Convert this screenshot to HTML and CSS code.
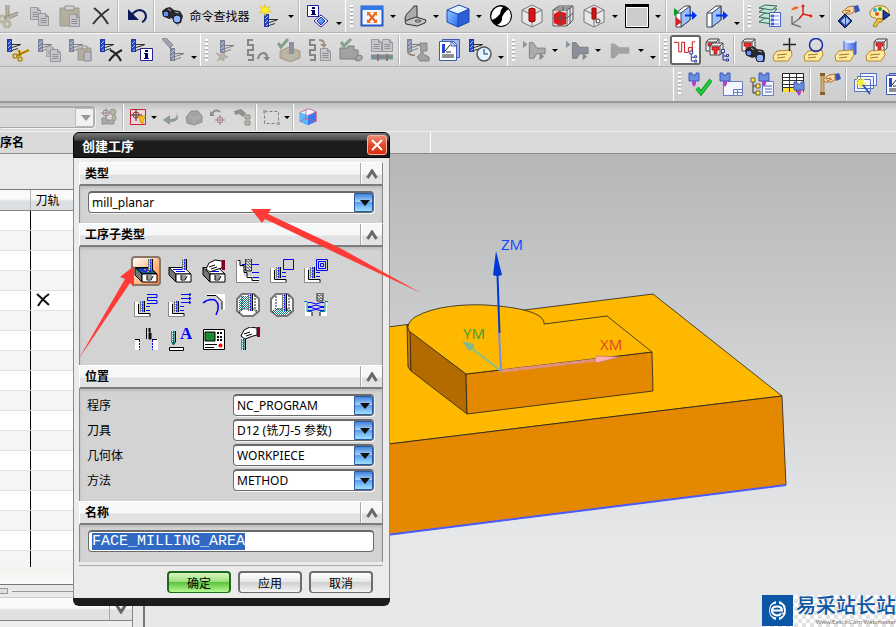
FILE: index.html
```html
<!DOCTYPE html>
<html lang="zh-CN">
<head>
    <meta charset="utf-8">
    <title>创建工序</title>
    <link rel="stylesheet" href="styles.css">
</head>
<body>
    <!-- Icon sprite -->
    <svg class="sprite" aria-hidden="true">
        <defs>
            <linearGradient id="g-blue" x1="0" y1="0" x2="1" y2="1"><stop offset="0" stop-color="#8ec8ff"/><stop offset="1" stop-color="#2a6cf0"/></linearGradient>
            <linearGradient id="g-cyl" x1="0" x2="1"><stop offset="0" stop-color="#b9d0ff"/><stop offset="1" stop-color="#3a63dd"/></linearGradient>
            <pattern id="p-check" width="2" height="2" patternUnits="userSpaceOnUse"><rect width="2" height="2" fill="#fff"/><rect width="1" height="1" fill="#088"/><rect x="1" y="1" width="1" height="1" fill="#088"/></pattern>
            <pattern id="p-mill" width="4" height="4" patternUnits="userSpaceOnUse"><rect width="4" height="4" fill="#2448c8"/><path d="M0 4 4 0" stroke="#9fc0ff"/></pattern>
            <pattern id="p-gray" width="3" height="3" patternUnits="userSpaceOnUse"><rect width="3" height="3" fill="#ddd"/><path d="M0 3 3 3M0 0 3 3" stroke="#333" stroke-width=".7"/></pattern>
            <g id="op">
                <rect x="1.500" y="1.500" width="4" height="12" fill="url(#p-mill)" stroke="#2238a0"/>
                <path d="M6 6.500h9M6 9.500 14 7M6 12.500l6-2" stroke="#333" fill="none"/>
            </g>
            <g id="mill"><rect width="5" height="11" fill="#5aa8a8"/><path d="M.5 0v11" stroke="#777"/><path d="M1.500 0v11" stroke="#fff" stroke-dasharray="1 1"/><path d="M2.500 0v11" stroke="#22f" stroke-dasharray="2 1"/><path d="M4.500 0v11" stroke="#000"/></g>
            <g id="tree"><path d="M2 2v9h4M2 7h4" fill="none" stroke="#239"/><path d="M.5.5h3v3h-3zM5.500 5.500h2v2h-2zM5.500 10h2v2h-2z" fill="#fff" stroke="#239"/></g>
            <g id="tag"><path d="M1 18 5 13l14-1 1 5-4 6-14 0z" fill="#ffe9a0" stroke="#b8862a"/><path d="M5 17l10-1M5 20l8-1" stroke="#a07820"/></g>
            <g id="binoc"><path d="M1 5 5 2 9 1 13 4 19 5 22 10 20 17 15 18 11 12 8 13 2 10z" fill="#2a2a2e"/><path d="M7 3l3 2M14 6l4 1" stroke="#aaa"/><ellipse cx="5" cy="8" rx="3" ry="3" fill="#678fe8" stroke="#112"/><ellipse cx="16" cy="13" rx="4" ry="4" fill="#8fb4ff" stroke="#112"/></g>
            <g id="redcube"><path d="M1 4 4 1h10v9l-3 3H1z" fill="#eee" stroke="#444"/><path d="M1 4h10v9M11 4l3-3" fill="none" stroke="#444"/><path d="M3 5h7v3H8v4H5V8H3z" fill="#e33" stroke="#800" stroke-width=".6"/></g>
            <g id="spindle"><path d="M1 1h3v2h4V1h3v8H1z" fill="#6c8ee0" stroke="#3a5ab8"/><path d="M4 9h4v3l-2 3-2-3z" fill="#b040d0"/></g>
            <g id="doc"><path d="M.5.5h7l3 3v9h-10z" fill="#b4b8cc" stroke="#667"/><path d="M7.500.5v3h3M2.500 5.500h6M2.500 7.500h6M2.500 9.500h6" fill="none" stroke="#556"/></g>
            <g id="hand"><path d="M0 7 6 2 12 1v6L8 9 3 9z" fill="#ffd9a0" stroke="#a87030"/><path d="M3 6 8 5M4 8 9 6" stroke="#a87030" fill="none"/><path d="M12 1l4-1 2 6-5 2z" fill="#3454b8"/></g>
            <g id="wirecube"><path d="M12 1 22 6v12l-10 5L2 18V6zM2 6l10 5 10-5M12 11v12" fill="#fff" fill-opacity=".4" stroke="#777"/></g>
            <g id="pocket"><path d="M.5 9v14.500h15" stroke="#888" fill="none"/><path d="M1 9h3v11h12v3H1z" fill="#fff"/><path d="M4.500 11v9.500H16v3" stroke="#000" fill="none"/><use href="#mill" x="6" y="8"/><path d="M12 13.500h4M12 17.500h4" stroke="#00f"/></g>
            <g id="glove"><path d="M4 10 7 4 13 1 20 2v7L16 10 8 13z" fill="#fff" stroke="#000"/><path d="M7 8 13 6M9 10l6-2" stroke="#000" fill="none"/><path d="M20 1h3v10h-3z" fill="#800020"/></g>
        </defs>

        <symbol id="i-cut" viewBox="0 0 24 24"><g fill="none" stroke="#b09a50" stroke-width="3"><path d="M11 1 12 14M22 9 8 15"/><circle cx="6" cy="15" r="3"/><circle cx="11" cy="20" r="3"/></g><g fill="none" stroke="#665820"><path d="M10 1v15M22 8 8 13M13 1v12M22 11l-9 4"/></g></symbol>
        <symbol id="i-copy" viewBox="0 0 24 24"><use href="#doc" x="3" y="3"/><use href="#doc" x="11" y="9"/></symbol>
        <symbol id="i-paste" viewBox="0 0 24 24"><path d="M2 4h19v18H2z" fill="#a98c3c" stroke="#665"/><path d="M7 2h9v4H7z" fill="#ccc" stroke="#555"/><use href="#doc" x="11" y="10"/></symbol>
        <symbol id="i-del" viewBox="0 0 24 24"><path d="M5 4Q13 10 19 20M20 5Q11 11 4 20" fill="none" stroke="#333" stroke-width="2"/></symbol>
        <symbol id="i-undo" viewBox="0 0 24 24"><path d="M6 12Q10 6 15 6q6 1 6 7-1 4-4 5" fill="none" stroke="#0c1a5c" stroke-width="2"/><path d="M3 5v11h11z" fill="#0c1a5c"/></symbol>
        <symbol id="i-find" viewBox="0 0 24 24"><path d="M13 17 20 15l-3 8z" fill="#aaa"/><use href="#binoc" x="0" y="2"/></symbol>
        <symbol id="i-newop" viewBox="0 0 24 24"><use href="#op" x="5" y="9"/><path d="M7 0 8 4 12 2 10 6 14 8 9 8 7 12 6 8 1 9 4 6 2 2 6 4z" fill="#ffee20" stroke="#e0b800" stroke-width=".5"/></symbol>
        <symbol id="i-info" viewBox="0 0 24 24"><path d="M1.500 1.500h11v11h-11z" fill="#fff" stroke="#229"/><path d="M6 3h3v2H6zM5 6h4v4h1v1H5v-1h1V7H5z" fill="#006"/><path d="M15 11 22 17 15 23 8 17z" fill="#fff" stroke="#229"/><path d="M15 13 19 17 15 21 11 17z" fill="url(#g-blue)" stroke="#229"/></symbol>
        <symbol id="i-win" viewBox="0 0 24 24"><path d="M1.500 2.500h21v19h-21z" fill="#f2f7ff" stroke="#2456c8" stroke-width="2"/><path d="M1 2h22v4H1z" fill="#3477e8"/><path d="M8 9 16 18M16 9 8 18" stroke="#e86010" stroke-width="2"/><path d="M7 8h4L7 12zM17 8v4l-4-4zM7 19v-4l4 4zM17 19h-4l4-4z" fill="#f07010"/></symbol>
        <symbol id="i-clip" viewBox="0 0 24 24"><path d="M2 16Q2 10 7 7L11 2 14 2v12l-9 3z" fill="#aaa" stroke="#333"/><path d="M2 17 13 13l10 3-1 3-8 3-11-2z" fill="#c4c4c4" stroke="#333"/><ellipse cx="15" cy="17" rx="3" ry="1" fill="#eee" stroke="#444"/></symbol>
        <symbol id="i-cube" viewBox="0 0 24 24"><path d="M1 6 13 1 23 5v13l-11 5L1 18z" fill="#4b90f8"/><path d="M1 6 13 1 23 5 12 10z" fill="#e4f5ff"/><path d="M1 6 12 10v13L1 18z" fill="url(#g-blue)"/><path d="M12 10 23 5v13l-11 5z" fill="#2c5fd8"/><path d="M1 6 13 1 23 5v13l-11 5L1 18zM1 6 12 10 23 5M12 10v13" fill="none" stroke="#1d48b8"/></symbol>
        <symbol id="i-bw" viewBox="0 0 24 24"><circle cx="12" cy="12" r="10.500" fill="#000"/><path d="M20 5Q24 12 20 19 14 24 8 21 14 18 13 13 16 7 20 5z" fill="#fff"/><path d="M4 7Q8 1 14 3 11 6 11 10 8 14 3 16 1 12 4 7z" fill="#fff"/><circle cx="12" cy="12" r="10.500" fill="none" stroke="#000"/></symbol>
        <symbol id="i-cyl" viewBox="0 0 24 24"><use href="#wirecube"/><path d="M9 5q3-2 6 0v12q-3 2-6 0z" fill="#d01818" stroke="#900"/></symbol>
        <symbol id="i-redgrid" viewBox="0 0 24 24"><path d="M2 6 8 2h14v14l-6 7H2z" fill="#e4e4e4"/><path d="M3 10 8 7l7 2v11l-6 2-6-3z" fill="#e01818"/><path d="M2 6 8 2h14v14l-6 6H2zM2 6h14v16M16 6l6-4M9 6v16M2 14h14l6-5M12 3v4M5 4h14v16" fill="none" stroke="#555"/></symbol>
        <symbol id="i-cyl2" viewBox="0 0 24 24"><use href="#wirecube"/><path d="M10 4h4v11h-4z" fill="#d01818" stroke="#900"/><circle cx="16" cy="17" r="2" fill="#fff" stroke="#333"/></symbol>
        <symbol id="i-rect" viewBox="0 0 24 24"><path d="M.5.5h23v23H.5z" fill="#ccc" stroke="#000"/><path d="M0 0h24v3H0z" fill="#000"/><path d="M1.500 3.500h21v19h-21z" fill="none" stroke="#fff"/></symbol>
        <symbol id="i-door" viewBox="0 0 24 24"><path d="M3 9 12 2h5v14l-9 7H3z" fill="#fff" stroke="#345"/><path d="M8 9 17 2v14l-9 7z" fill="#9cc0ff" stroke="#345"/><path d="M3 9h5" stroke="#345"/><path d="M12 10.500h7V7l5 4.500-5 4.500v-3.500h-7z" fill="#0030f0"/></symbol>
        <symbol id="i-doorin" viewBox="0 0 24 24"><use href="#i-door" width="24" height="24"/><path d="M1 4 6 8 1 12z" fill="#0a9a20"/><path d="M3 13v9l6-4z" fill="#d82020"/></symbol>
        <symbol id="i-layers" viewBox="0 0 24 24"><g fill="#c0e8d4" stroke="#356a5a"><path d="M1 18 7 14l12 1-5 5z"/><path d="M1 13 7 9l12 1-5 5z"/><path d="M1 8 7 4l12 1-5 5z"/><path d="M1 4 7 1l12 1-5 4z"/></g><path d="M11.500 8.500h11v14h-11z" fill="#f4f7ff" stroke="#4462c8"/><path d="M13 11h3v2h-3zM13 15h3v2h-3zM13 19h3v2h-3zM17 12h4M17 16h4M17 20h4" fill="#4462c8" stroke="#4462c8" stroke-width=".7"/></symbol>
        <symbol id="i-axes" viewBox="0 0 24 24"><path d="M14 1v9l8 2M14 10l-4 5" fill="none" stroke="#e02010" stroke-width="1.500"/><path d="M12 3 14 0l2 3zM21 10l3 2-3 2z" fill="#e02010"/><path d="M3 12v8l9 3M3 20l7-5" fill="none" stroke="#777" stroke-width="1.500"/><path d="M2 6Q5 1 10 3L8 5 4 6z" fill="#e86820"/></symbol>
        <symbol id="i-handop" viewBox="0 0 24 24"><use href="#hand" x="5" y="1"/><path d="M8 10 15 17 8 24 1 17z" fill="#1e3c98" stroke="#001850"/><path d="M8 13v8l-4-4zM9 13l4 4-4 4z" fill="#a9c8ff"/></symbol>
        <symbol id="i-palette" viewBox="0 0 24 24"><path d="M2 8Q6 0 15 2q7 2 6 9-3 5-9 4-4 1-5-1-6-1-5-6z" fill="#ffe7a8" stroke="#a87c20"/><circle cx="7" cy="6" r="2" fill="#20b0e0"/><circle cx="12" cy="5" r="2" fill="#30a030"/><circle cx="9" cy="10" r="2" fill="#e05020"/><path d="M15 6 22 11 15 16z" fill="#1e3c98" stroke="#001850"/><path d="M5 22l5-8 4 1v3h-3l-3 5z" fill="#f2c53c" stroke="#a87c20"/></symbol>

        <symbol id="i-opcut" viewBox="0 0 24 24"><use href="#op"/><path d="M13 12l1 6M23 12l-13 6" stroke="#dcb020" stroke-width="3"/><path d="M13 12l1 6M23 12l-13 6" stroke="#7a6010"/><g fill="none" stroke="#b08810" stroke-width="1.500"><circle cx="9" cy="18" r="2"/><circle cx="14" cy="21" r="2"/></g></symbol>
        <symbol id="i-opcopy" viewBox="0 0 24 24"><use href="#op"/><use href="#doc" x="9" y="8" transform="translate(2 2) scale(.8)"/><use href="#doc" x="13" y="11"/></symbol>
        <symbol id="i-oppaste" viewBox="0 0 24 24"><use href="#op"/><path d="M10 10h13v12H10z" fill="#a98c3c" stroke="#665"/><path d="M14 8h5v3h-5z" fill="#ccc" stroke="#555"/><path d="M16 14h7v9h-7z" fill="#aab" stroke="#556"/></symbol>
        <symbol id="i-opdel" viewBox="0 0 24 24"><use href="#op"/><path d="M11 12Q18 15 22 23M23 12Q15 16 10 23" fill="none" stroke="#222" stroke-width="2"/></symbol>
        <symbol id="i-opinfo" viewBox="0 0 24 24"><use href="#op"/><path d="M10.500 10.500h12v12h-12z" fill="#fff" stroke="#229"/><path d="M15 12h3v2h-3zM14 15h4v5h1v1h-5v-1h1v-4h-1z" fill="#006"/></symbol>
        <symbol id="i-optool" viewBox="0 0 24 24"><path d="M1 1 5 0l7 7-3 3z" fill="#5a7ab8" stroke="#445"/><use href="#op" x="8" y="9"/></symbol>
        <symbol id="i-gen" viewBox="0 0 24 24"><use href="#op" x="4" y="1"/><path d="M5 17 1 15l4 4-3 4 4-2 3 2v-3l4-1-4-2 1-3z" fill="#b89858" stroke="#806030" stroke-width=".6"/></symbol>
        <symbol id="i-path" viewBox="0 0 24 24"><path d="M7 2H2v5h5v5H2v5h5v5H2" fill="none" stroke="#444" stroke-width="2"/><path d="M12 21q1-6 6-6 3 1 3 4" fill="none" stroke="#345" stroke-width="2"/><path d="M17 19h7l-3 4z" fill="#345"/></symbol>
        <symbol id="i-verify" viewBox="0 0 24 24"><path d="M3 13 12 9l11 4v7l-10 4L3 20z" fill="#d88838" stroke="#864"/><path d="M6 15l7 2 7-2v4l-7 3-7-3z" fill="#9a4"/><rect x="12" y="4" width="5" height="12" fill="#3b56a8"/><path d="M1 5 4 9 11 1" fill="none" stroke="#0a8a28" stroke-width="3"/></symbol>
        <symbol id="i-list" viewBox="0 0 24 24"><path d="M7 2H2v5h5v5H2v5h5v5H2" fill="none" stroke="#444" stroke-width="2"/><path d="M11 2q5 0 5 4" fill="none" stroke="#c04010" stroke-width="2"/><path d="M12 6h7l-3 4z" fill="#c04010"/><use href="#doc" x="12" y="10"/></symbol>
        <symbol id="i-machine" viewBox="0 0 24 24"><path d="M1 10h8V8h6v4h4v9H1z" fill="#777" stroke="#333"/><path d="M16 22l3-5 4 1v3l-3 2z" fill="#888" stroke="#333"/><path d="M2 4 5 8 12 1" fill="none" stroke="#0a8a28" stroke-width="3"/></symbol>
        <symbol id="i-docs" viewBox="0 0 24 24"><use href="#doc" x="1" y="1"/><use href="#doc" x="12" y="1"/><path d="M1 19h22" stroke="#066" stroke-width="5"/><path d="M8 16v7M17 16v7" stroke="#a04" stroke-width="2"/></symbol>
        <symbol id="i-post" viewBox="0 0 24 24"><use href="#op"/><path d="M2 14q2 4 7 3" fill="none" stroke="#a04010" stroke-width="2"/><path d="M14 5h7v8h-4v3l6 3v4h-9l-3-4 4-4z" fill="#777" stroke="#444"/></symbol>
        <symbol id="i-opdoc" viewBox="0 0 24 24"><path d="M5.500 1.500h17v18h-17z" fill="#a4b2ea" stroke="#4058b8"/><path d="M2.500 3.500h14l3 3v16h-17z" fill="#fff" stroke="#4058b8"/><path d="M5 6h3v9H5z" fill="#2448c8"/><path d="M8 13 13 7M9 14h5M5 17h12M5 19h12" stroke="#222"/><path d="M14 3v5h5z" fill="#cfe4ff" stroke="#4058b8"/></symbol>
        <symbol id="i-clock" viewBox="0 0 24 24"><use href="#op"/><circle cx="16" cy="16" r="7" fill="#e2f4ff" stroke="#555" stroke-width="1.500"/><path d="M16 11v5h4" fill="none" stroke="#036"/></symbol>
        <symbol id="i-funnel" viewBox="0 0 26 24"><path d="M8 4h4l4 6h9v6h-9l-3 5H8z" fill="#888" stroke="#333"/><path d="M1 2v8l5-4z" fill="#286a78"/><path d="M19 15v8l5-4z" fill="#803080"/></symbol>
        <symbol id="i-funnel2" viewBox="0 0 26 24"><path d="M8 4h4l4 5h9v7h-9l-3 5H8z" fill="#45508c" stroke="#333"/><path d="M1 2v8l5-4z" fill="#286a78"/><path d="M19 15v8l5-4z" fill="#803080"/></symbol>
        <symbol id="i-funnel3" viewBox="0 0 26 24"><path d="M3 5h4l5 4h11v7H12l-5 5H3z" fill="#777"/></symbol>
        <symbol id="i-nav" viewBox="0 0 28 28"><path d="M2 5.500h5v10h3v-10h3M13 5v11h4v-5h4v5M21 16V5h3" fill="none" stroke="#c01818"/><use href="#tree" x="18" y="14"/></symbol>
        <symbol id="i-cubes" viewBox="0 0 24 24"><use href="#redcube"/><use href="#redcube" x="3" y="4" transform="translate(1 0)"/><use href="#tree" x="16" y="11"/></symbol>
        <symbol id="i-findcube" viewBox="0 0 24 24"><use href="#redcube"/><use href="#binoc" x="3" y="7"/></symbol>
        <symbol id="i-tagplus" viewBox="0 0 24 24"><use href="#tag"/><path d="M11 6.500h13M17.500 0v13" stroke="#222" stroke-width="1.500"/></symbol>
        <symbol id="i-tagring" viewBox="0 0 24 24"><use href="#tag"/><circle cx="13" cy="7" r="6.500" fill="none" stroke="#1c2ea8" stroke-width="1.500"/></symbol>
        <symbol id="i-tagcyl" viewBox="0 0 24 24"><path d="M10 3v13q6 3 12 0V3q-6-3-12 0z" fill="url(#g-cyl)" stroke="#3a5ac0"/><ellipse cx="16" cy="3" rx="6" ry="2" fill="#dce9ff"/><use href="#tag"/></symbol>
        <symbol id="i-tagcube" viewBox="0 0 24 24"><use href="#redcube" x="8"/><use href="#tag"/></symbol>

        <symbol id="i-spcheck" viewBox="0 0 24 24"><use href="#spindle"/><path d="M9 16 13 21 23 8" fill="none" stroke="#0a9a20" stroke-width="4"/><path d="M9 16 13 21 23 8" fill="none" stroke="#20d840" stroke-width="2"/></symbol>
        <symbol id="i-spwin" viewBox="0 0 24 24"><path d="M4.500 9.500h19v14h-19z" fill="#f4f7ff" stroke="#6a7ec0"/><path d="M14 17.500h9M18.500 17v6M14.500 17v6M15 20.500h8" stroke="#6a7ec0"/><use href="#spindle"/></symbol>
        <symbol id="i-sptree" viewBox="0 0 24 24"><path d="M12.500 9.500h11v14h-11z" fill="#f4f7ff" stroke="#6a7ec0"/><path d="M15 14h7M15 17h7M15 20h7" stroke="#4462c8"/><path d="M3 8v13h4M3 14h4" fill="none" stroke="#333"/><path d="M1 6h4v4H1zM6 12h4v4H6zM6 19h4v4H6z" fill="#ffe840" stroke="#333" stroke-width=".7"/><use href="#spindle" x="8"/></symbol>
        <symbol id="i-sptable" viewBox="0 0 24 24"><path d="M1.500 1.500h21v18h-21z" fill="#fff" stroke="#222"/><path d="M2 16h20v4H2z" fill="#ffdf30"/><path d="M1 5.500h21M1 8.500h21M1 12.500h21M1 15.500h21M8.500 1v19M15.500 1v19" stroke="#333"/><use href="#spindle" x="12" y="9"/></symbol>
        <symbol id="i-stand" viewBox="0 0 24 24"><path d="M4 3h3v18H4z" fill="#e0b060" stroke="#85602a" stroke-width=".6"/><path d="M3 1h5v3H3zM3 20h5v3H3z" fill="#85602a"/><use href="#hand" x="6" y="1"/></symbol>
        <symbol id="i-wins" viewBox="0 0 24 24"><path d="M7.500 1.500h16v12h-16zM4.500 4.500h16v12h-16zM1.500 7.500h16v12h-16z" fill="#f4f7ff" stroke="#5570c8"/><path d="M7 4l1 4 4-2-2 4 4 2-5 1-2 4-1-4-5-1 4-2-2-4 4 2z" fill="#f4ee40"/><path d="M10 13 17 22" stroke="#3454b8" stroke-width="2"/></symbol>

        <symbol id="i-cluster" viewBox="0 0 18 18"><path d="M2 10h5v6H2zM8 12h6v4H8z" fill="#889" stroke="#555"/><circle cx="6" cy="5" r="3" fill="none" stroke="#a33"/><path d="M6 0v10M1 5h10" stroke="#a33"/><ellipse cx="13" cy="4" rx="3" ry="3" fill="#a94" stroke="#662"/><ellipse cx="14" cy="10" rx="2" ry="3" fill="#a94" stroke="#662"/></symbol>
        <symbol id="i-snap" viewBox="0 0 18 18"><path d="M1.500 1.500h15v15h-15z" fill="#e8d8d8" stroke="#d02030"/><circle cx="7" cy="7" r="3" fill="none" stroke="#d02030"/><path d="M7 1v12M1 7h12" stroke="#333"/><path d="M8 8h9l-3 4v4l-3-2v-3z" fill="#ffc020" stroke="#b07800" stroke-width=".6"/></symbol>
        <symbol id="i-back" viewBox="0 0 18 18"><path d="M15 4q3 7-6 7V7l-7 5 7 5v-3q12 0 6-10z" fill="#3a6a76"/></symbol>
        <symbol id="i-dome" viewBox="0 0 18 18"><path d="M1 9 6 3l7 0 4 5v6l-8 3-7-2z" fill="#777" stroke="#555"/><path d="M4 8l5 3 7-3M9 11v5" fill="none" stroke="#999"/></symbol>
        <symbol id="i-rot" viewBox="0 0 18 18"><path d="M3 6Q6 0 11 4" fill="none" stroke="#456" stroke-width="2"/><path d="M1 3v5h5z" fill="#456"/><circle cx="11" cy="12" r="3" fill="none" stroke="#a33"/><path d="M11 7v10M6 12h10" stroke="#a33"/></symbol>
        <symbol id="i-stack" viewBox="0 0 18 18"><path d="M1 3 8 1l5 4-3 4-4-3-4 1z" fill="#555"/><path d="M12 7h5v4h-5zM12 13h5v4h-5z" fill="#a94" stroke="#554"/></symbol>
        <symbol id="i-dash" viewBox="0 0 18 18"><path d="M2.500 3.500h14v12h-14z" fill="none" stroke="#333" stroke-dasharray="3 2"/><path d="M1 2h3v3H1zM15 14h3v3h-3z" fill="#b66"/></symbol>
        <symbol id="i-cubered" viewBox="0 0 24 24"><path d="M1 6 13 1 23 5v13l-11 5L1 18z" fill="#3c78f0"/><path d="M1 6 13 1 23 5 12 10z" fill="#f0f4ff"/><path d="M1 6 12 10v13L1 18z" fill="#5cb8ff"/><path d="M1 6 13 1 23 5v13M9 2v12l14 4M1 18l8-4M12 10l11-5" fill="none" stroke="#d85078"/></symbol>

        <!-- Operation subtypes -->
        <symbol id="s-tray" viewBox="0 0 24 24"><path d="M1 8 8 15v8L1 16z" fill="#777" stroke="#000"/><path d="M1 8.500h15l7 6.500H8z" fill="#fff" stroke="#000"/><path d="M5 10.500h9M8 12.500h9" stroke="#00f"/><path d="M8 15h15v8H8z" fill="#fff" stroke="#000"/><path d="M13 16h5v4h-5z" fill="#999"/><path d="M13 16v5h4l2-4" fill="none" stroke="#000"/></symbol>
        <symbol id="s-area" viewBox="0 0 24 24"><use href="#s-tray" width="24" height="24"/><path d="M2 9h14l6 5.500H8z" fill="#077" stroke="#000"/><path d="M5 10.500h9M8 12.500h9" stroke="#22f" stroke-width="1.500"/><path d="M10 10.500h2M13 12.500h2" stroke="#ff8a3c"/><use href="#mill" x="14" y="0"/></symbol>
        <symbol id="s-face" viewBox="0 0 24 24"><use href="#s-tray" width="24" height="24"/><use href="#mill" x="14" y="0"/></symbol>
        <symbol id="s-manual" viewBox="0 0 24 24"><use href="#s-tray" width="24" height="24"/><use href="#glove"/></symbol>
        <symbol id="s-planar" viewBox="0 0 24 24"><path d="M1 2v21h22v-3h-7v-3H8V8H4V2z" fill="#fff"/><path d="M.5 1v22.500H23" fill="none" stroke="#888"/><path d="M2 1.500h2v5h4v7h3v5h5v3h7" fill="none" stroke="#000"/><path d="M9.500 0h6v12h-6z" fill="url(#p-gray)" stroke="#333"/><path d="M6 5.500h3M16 5.500h7M16 13.500h7M17 18.500h6" stroke="#00f"/></symbol>
        <symbol id="s-profile" viewBox="0 0 24 24"><use href="#pocket"/><path d="M13.500.5h10v10h-10z" fill="none" stroke="#00f"/></symbol>
        <symbol id="s-follow" viewBox="0 0 24 24"><use href="#pocket"/><path d="M12.500.5h11v11h-11zM14.500 2.500h7v7h-7zM16.500 4.500h3v3h-3z" fill="none" stroke="#00f"/></symbol>
        <symbol id="s-zig" viewBox="0 0 24 24"><use href="#pocket"/><path d="M13 1.500h10v3H13.500v3H23v3H13" fill="none" stroke="#00f"/></symbol>
        <symbol id="s-zigw" viewBox="0 0 24 24"><use href="#pocket"/><path d="M13 1.500h10M13 5.500h10M13 9.500h10M21 0l2 1.500-2 1.500M21 4l2 1.500-2 1.500M21 8l2 1.500-2 1.500" fill="none" stroke="#00f"/></symbol>
        <symbol id="s-curve" viewBox="0 0 24 24"><path d="M5 1h18v16h-3V9l-5-6H5z" fill="#fff"/><path d="M5 2.500h9l6 6v8" fill="none" stroke="#000"/><path d="M1 10q6-5 12-3 6 5 1 15" fill="none" stroke="#00f" stroke-width="1.500"/></symbol>
        <symbol id="s-corner" viewBox="0 0 24 24"><path d="M6 1h12l5 5v12l-6 5H7l-6-5V6z" fill="#fff" stroke="#777" stroke-width="2"/><path d="M3 6 7 3h6v12l-7 1-3 2z" fill="url(#p-check)"/><path d="M6 3v13l-4 3M19 2v14l3 3M3 20l4-4h11l3 4" fill="none" stroke="#222" stroke-dasharray="2 1"/><use href="#mill" x="12" y="1"/><use href="#mill" x="12" y="7"/></symbol>
        <symbol id="s-corner2" viewBox="0 0 24 24"><path d="M6 1h12l5 5v12l-6 5H7l-6-5V6z" fill="#fff" stroke="#777" stroke-width="2"/><path d="M3 20l4-5 9 1 4 3-4 3H7z" fill="url(#p-check)"/><path d="M6 3v12l-4 4M19 2v14l3 3M3 20l4-4h11l3 4" fill="none" stroke="#222" stroke-dasharray="2 1"/><use href="#mill" x="12" y="1"/><use href="#mill" x="12" y="7"/></symbol>
        <symbol id="s-thread" viewBox="0 0 24 24"><path d="M1 8h2v10h5v5H1zM23 8h-2v10h-5v5h7z" fill="#fff"/><path d="M0 8.500h3v10h5M24 8.500h-3v10h-5" fill="none" stroke="#088"/><path d="M8 19v4M16 19v4" stroke="#000"/><path d="M13 0h6v8h-6z" fill="url(#p-gray)" stroke="#333"/><path d="M4 9.500h3q5 3 10 0h3M4 13.500h3q5-3 10 0h3M4 14.500h3q5 3 10 0h3M4 17.500h3q5-2 10 0h3" fill="none" stroke="#00f"/></symbol>
        <symbol id="s-hole" viewBox="0 0 24 24"><path d="M1 12h5v11H1zM19 12h5v11h-5z" fill="#fff"/><path d="M1 12.500h5M18 12.500h5" stroke="#000"/><path d="M5.500 13v10M18.500 13v10" stroke="#00f" stroke-dasharray="2 1"/><path d="M12.500 1v11M15 1v4h1V1M15 6v6h2V6z" fill="#222" stroke="#000"/></symbol>
        <symbol id="s-ctrl" viewBox="0 0 24 24"><path d="M1.500 2.500h21v20h-21z" fill="#fff" stroke="#000"/><path d="M3 5h10v9H3z" fill="#1c8a30" stroke="#000"/><path d="M15 5h2v2h-2zM18 5h2v2h-2zM15 9h2v2h-2zM18 9h2v2h-2zM15 12h2v2h-2zM18 12h2v2h-2z" fill="#000"/><path d="M3 17.500h12M3 20.500h9" stroke="#000"/><circle cx="18.500" cy="18.500" r="2" fill="#f00"/></symbol>
        <symbol id="s-user" viewBox="0 0 24 24"><use href="#mill" x="5" y="12"/><use href="#glove" x="1" y="-1"/></symbol>
        <symbol id="chev" viewBox="0 0 12 10"><path d="M1.500 9 6 2l4.500 7" fill="none" stroke="#666" stroke-width="3"/></symbol>
    </svg>

    <header class="toolbars">
        <div class="bar bar-standard">
            <button class="tool off" aria-label="剪切"><svg><use href="#i-cut"/></svg></button>
            <button class="tool off" aria-label="复制"><svg><use href="#i-copy"/></svg></button>
            <button class="tool off" aria-label="粘贴"><svg><use href="#i-paste"/></svg></button>
            <button class="tool" aria-label="删除"><svg><use href="#i-del"/></svg></button>
            <i class="sep"></i>
            <button class="tool" aria-label="撤销"><svg><use href="#i-undo"/></svg></button>
            <i class="sep"></i>
            <button class="tool tool-text"><svg><use href="#i-find"/></svg>命令查找器</button>
            <button class="tool" aria-label="创建工序"><svg><use href="#i-newop"/></svg></button>
            <button class="drop" aria-label="更多"></button>
            <i class="sep"></i>
            <button class="tool" aria-label="信息"><svg><use href="#i-info"/></svg></button>
            <button class="drop low" aria-label="工具条选项"></button>
            <i class="grip"></i>
            <button class="tool" aria-label="适合窗口"><svg><use href="#i-win"/></svg></button>
            <button class="drop" aria-label="更多"></button>
            <button class="tool" aria-label="透视"><svg><use href="#i-clip"/></svg></button>
            <button class="drop" aria-label="更多"></button>
            <button class="tool" aria-label="着色"><svg><use href="#i-cube"/></svg></button>
            <button class="drop" aria-label="更多"></button>
            <button class="tool" aria-label="高质量图像"><svg><use href="#i-bw"/></svg></button>
            <button class="tool" aria-label="剖切"><svg><use href="#i-cyl"/></svg></button>
            <button class="tool" aria-label="编辑截面"><svg><use href="#i-redgrid"/></svg></button>
            <button class="tool" aria-label="截面"><svg><use href="#i-cyl2"/></svg></button>
            <button class="drop" aria-label="更多"></button>
            <button class="tool" aria-label="背景"><svg><use href="#i-rect"/></svg></button>
            <button class="drop" aria-label="更多"></button>
            <i class="sep"></i>
            <button class="tool" aria-label="进入"><svg><use href="#i-doorin"/></svg></button>
            <button class="tool" aria-label="退出"><svg><use href="#i-door"/></svg></button>
            <button class="drop low" aria-label="工具条选项"></button>
            <i class="grip"></i>
            <button class="tool" aria-label="图层设置"><svg><use href="#i-layers"/></svg></button>
            <button class="tool" aria-label="坐标系"><svg><use href="#i-axes"/></svg></button>
            <button class="drop" aria-label="更多"></button>
            <i class="sep"></i>
            <button class="tool" aria-label="移动对象"><svg><use href="#i-handop"/></svg></button>
            <button class="tool" aria-label="对象显示"><svg><use href="#i-palette"/></svg></button>
        </div>

        <div class="bar bar-operation">
            <button class="tool" aria-label="剪切工序"><svg><use href="#i-opcut"/></svg></button>
            <button class="tool off" aria-label="复制工序"><svg><use href="#i-opcopy"/></svg></button>
            <button class="tool off" aria-label="粘贴工序"><svg><use href="#i-oppaste"/></svg></button>
            <button class="tool" aria-label="删除工序"><svg><use href="#i-opdel"/></svg></button>
            <button class="tool" aria-label="工序信息"><svg><use href="#i-opinfo"/></svg></button>
            <button class="tool off" aria-label="显示刀具"><svg><use href="#i-optool"/></svg></button>
            <button class="drop low" aria-label="工具条选项"></button>
            <i class="grip"></i>
            <button class="tool off" aria-label="生成刀轨"><svg><use href="#i-gen"/></svg></button>
            <button class="tool off" aria-label="重播刀轨"><svg><use href="#i-path"/></svg></button>
            <button class="tool off" aria-label="确认刀轨"><svg><use href="#i-verify"/></svg></button>
            <button class="tool off" aria-label="列出刀轨"><svg><use href="#i-list"/></svg></button>
            <button class="tool off" aria-label="机床仿真"><svg><use href="#i-machine"/></svg></button>
            <button class="tool off" aria-label="同步"><svg><use href="#i-docs"/></svg></button>
            <i class="sep"></i>
            <button class="tool off" aria-label="后处理"><svg><use href="#i-post"/></svg></button>
            <button class="tool" aria-label="车间文档"><svg><use href="#i-opdoc"/></svg></button>
            <button class="tool" aria-label="进给率"><svg><use href="#i-clock"/></svg></button>
            <button class="drop low" aria-label="工具条选项"></button>
            <i class="grip"></i>
            <button class="tool off" aria-label="输入"><svg><use href="#i-funnel"/></svg></button>
            <button class="drop" aria-label="更多"></button>
            <button class="tool off" aria-label="过程"><svg><use href="#i-funnel2"/></svg></button>
            <button class="drop" aria-label="更多"></button>
            <button class="tool off" aria-label="输出"><svg><use href="#i-funnel3"/></svg></button>
            <button class="drop" aria-label="更多"></button>
            <button class="drop low" aria-label="工具条选项"></button>
            <i class="grip"></i>
            <button class="tool active" aria-label="程序顺序视图"><svg><use href="#i-nav"/></svg></button>
            <button class="tool" aria-label="几何视图"><svg><use href="#i-cubes"/></svg></button>
            <i class="sep"></i>
            <button class="tool" aria-label="查找特征"><svg><use href="#i-findcube"/></svg></button>
            <button class="tool" aria-label="标记点"><svg><use href="#i-tagplus"/></svg></button>
            <button class="tool" aria-label="标记圆"><svg><use href="#i-tagring"/></svg></button>
            <button class="tool" aria-label="标记圆柱"><svg><use href="#i-tagcyl"/></svg></button>
            <button class="tool" aria-label="标记特征"><svg><use href="#i-tagcube"/></svg></button>
        </div>

        <div class="bar bar-machine">
            <i class="grip"></i>
            <button class="tool" aria-label="确认"><svg><use href="#i-spcheck"/></svg></button>
            <button class="tool" aria-label="机床视图"><svg><use href="#i-spwin"/></svg></button>
            <button class="tool" aria-label="机床树"><svg><use href="#i-sptree"/></svg></button>
            <button class="tool" aria-label="刀具表"><svg><use href="#i-sptable"/></svg></button>
            <i class="sep"></i>
            <button class="tool" aria-label="夹具"><svg><use href="#i-stand"/></svg></button>
            <i class="sep"></i>
            <button class="tool" aria-label="向导"><svg><use href="#i-wins"/></svg></button>
            <button class="tool" aria-label="文档"><svg><use href="#i-opdoc"/></svg></button>
        </div>

        <div class="bar bar-select">
            <div class="combo combo-off">
                <select aria-label="选择过滤器" disabled><option></option></select>
            </div>
            <button class="tool small off" aria-label="选择范围"><svg><use href="#i-cluster"/></svg></button>
            <i class="sep"></i>
            <button class="tool small" aria-label="捕捉点"><svg><use href="#i-snap"/></svg></button>
            <button class="drop" aria-label="更多"></button>
            <button class="tool small off" aria-label="返回"><svg><use href="#i-back"/></svg></button>
            <button class="tool small off" aria-label="实体"><svg><use href="#i-dome"/></svg></button>
            <button class="tool small off" aria-label="旋转点"><svg><use href="#i-rot"/></svg></button>
            <button class="tool small off" aria-label="查找"><svg><use href="#i-stack"/></svg></button>
            <i class="sep"></i>
            <button class="tool small off" aria-label="矩形选择"><svg><use href="#i-dash"/></svg></button>
            <button class="drop" aria-label="更多"></button>
            <i class="sep"></i>
            <button class="tool small" aria-label="着色显示"><svg><use href="#i-cubered"/></svg></button>
        </div>
    </header>

    <div class="strip">
        <h2>序名</h2>
        <span class="strip-end"></span>
    </div>

    <main class="workspace">
        <aside class="navigator">
            <div class="nav-info"></div>
            <div class="nav-table">
                <table>
                    <thead><tr><th></th><th>刀轨</th></tr></thead>
                    <tbody>
                        <tr><td></td><td></td></tr>
                        <tr><td></td><td></td></tr>
                        <tr><td></td><td></td></tr>
                        <tr><td></td><td></td></tr>
                        <tr><td></td><td><svg class="mark" viewBox="0 0 14 14"><path d="M1 1 13 12M13 1Q6 6 2 13" fill="none" stroke="#111" stroke-width="2"/></svg></td></tr>
                        <tr><td></td><td></td></tr>
                        <tr><td></td><td></td></tr>
                        <tr><td></td><td></td></tr>
                        <tr><td></td><td></td></tr>
                        <tr><td></td><td></td></tr>
                        <tr><td></td><td></td></tr>
                        <tr><td></td><td></td></tr>
                        <tr><td></td><td></td></tr>
                        <tr><td></td><td></td></tr>
                        <tr><td></td><td></td></tr>
                        <tr><td></td><td></td></tr>
                        <tr><td></td><td></td></tr>
                        <tr><td></td><td></td></tr>
                    </tbody>
                </table>
            </div>
            <div class="nav-foot"></div>
            <div class="nav-scroll"><span></span></div>
            <div class="nav-panel"><button aria-label="展开"><svg><use href="#chev"/></svg></button></div>
            <div class="nav-rest"></div>
        </aside>

        <section class="viewport">
            <svg class="model" viewBox="146 154 750 473" preserveAspectRatio="xMinYMin meet">
                <g stroke="#222" stroke-width=".8" stroke-linejoin="round">
                    <path d="M300 338 654 294 783 396 300 455z" fill="#ffb800"/>
                    <path d="M300 455 783 396 787 485 300 546z" fill="#e48800"/>
                    <path d="M408 325 412 331V371L409 367z" fill="#cf7c00"/>
                    <path d="M411 331 467 374 468 414 412 371z" fill="#b36b00"/>
                    <path d="M467 374 653 352 654 391 468 414z" fill="#e48800"/>
                    <path d="M467 374 410 331Q406 324 416 317C435 306 465 304 487 305 520 307 546 313 545 324L608 316 653 352z" fill="#ffb800"/>
                </g>
                <path d="M300 546 787 485" stroke="#4a5cff" stroke-width="2"/>
                <path d="M502 371 471 347" stroke="#86c08c" stroke-width="2"/>
                <path d="M463 341 475 344Q476 349 470 351z" fill="#86b890"/>
                <path d="M502 371 597 360" stroke="#e09080" stroke-width="3"/>
                <path d="M621 357 597 356Q595 360 597 363z" fill="#ffb0b0" stroke="#b87060" stroke-width=".6"/>
                <path d="M502 371 500 332" stroke="#7c8ce8" stroke-width="2"/>
                <path d="M500.500 333 498.500 275" stroke="#0038d8" stroke-width="2"/>
                <path d="M497 251 503 275Q498 277 494 275z" fill="#0038d8"/>
                <text x="502" y="250" fill="#0848ff">ZM</text>
                <text x="464" y="339" fill="#38a038">YM</text>
                <text x="601" y="350" fill="#d84828">XM</text>
            </svg>
        </section>

        <div class="watermark">
            <svg viewBox="0 0 31 31"><path d="M0 0h31v31H0z" fill="#0c56a6"/><path d="M14 6a10 10 0 0 0 0 19v-5a5 5 0 0 1 0-9zM17 6a10 10 0 0 1 0 19v-5a5 5 0 0 0 0-9z" fill="#fff"/><path d="M10 15.500h10q0-5-5-5t-5 5 5 5q3 0 5-2" fill="none" stroke="#0c56a6" stroke-width="4"/><path d="M11 15.500h9q0-4-5-4t-5 4 5 5q3 0 4-2" fill="none" stroke="#fff" stroke-width="2"/></svg>
            <div>
                <strong>易采站长站</strong>
                <small>Www.Easck.Com Webmaster</small>
            </div>
        </div>
    </main>

    <form class="dialog">
        <div class="title"><h1>创建工序</h1><button type="button" class="close" aria-label="关闭"><svg viewBox="0 0 12 12"><path d="M1 1 11 11M11 1 1 11" stroke="#fff" stroke-width="2"/></svg></button></div>

        <div class="content">
            <div class="head"><h3>类型</h3><button type="button" aria-label="折叠"><svg><use href="#chev"/></svg></button></div>
            <div class="section section-type">
                <div class="combo">
                    <select aria-label="类型"><option>mill_planar</option></select>
                </div>
            </div>

            <div class="head"><h3>工序子类型</h3><button type="button" aria-label="折叠"><svg><use href="#chev"/></svg></button></div>
            <div class="section subtypes">
                <button type="button" class="selected" aria-label="FACE_MILLING_AREA"><svg><use href="#s-area"/></svg></button>
                <button type="button" aria-label="FACE_MILLING"><svg><use href="#s-face"/></svg></button>
                <button type="button" aria-label="FACE_MILLING_MANUAL"><svg><use href="#s-manual"/></svg></button>
                <button type="button" aria-label="PLANAR_MILL"><svg><use href="#s-planar"/></svg></button>
                <button type="button" aria-label="PLANAR_PROFILE"><svg><use href="#s-profile"/></svg></button>
                <button type="button" aria-label="ROUGH_FOLLOW"><svg><use href="#s-follow"/></svg></button>
                <button type="button" aria-label="ROUGH_ZIGZAG"><svg><use href="#s-zig"/></svg></button>
                <button type="button" aria-label="ROUGH_ZIG"><svg><use href="#s-zigw"/></svg></button>
                <button type="button" aria-label="CLEANUP_CORNERS"><svg><use href="#s-curve"/></svg></button>
                <button type="button" aria-label="FINISH_WALLS"><svg><use href="#s-corner"/></svg></button>
                <button type="button" aria-label="FINISH_FLOOR"><svg><use href="#s-corner2"/></svg></button>
                <button type="button" aria-label="HOLE_MILLING"><svg><use href="#s-thread"/></svg></button>
                <button type="button" aria-label="THREAD_MILLING"><svg><use href="#s-hole"/></svg></button>
                <button type="button" aria-label="PLANAR_TEXT"><svg viewBox="0 0 24 24"><use href="#mill" x="3" y="4"/><path d="M3 15h5l-2 3H5z" fill="#066"/><path d="M1.500 20.500h14v3h-14z" fill="#fff" stroke="#000"/><text x="12" y="12" class="letter">A</text></svg></button>
                <button type="button" aria-label="MILL_CONTROL"><svg><use href="#s-ctrl"/></svg></button>
                <button type="button" aria-label="MILL_USER"><svg><use href="#s-user"/></svg></button>
            </div>

            <div class="head"><h3>位置</h3><button type="button" aria-label="折叠"><svg><use href="#chev"/></svg></button></div>
            <div class="section location">
                <label for="program">程序</label>
                <div class="combo"><select id="program"><option>NC_PROGRAM</option></select></div>
                <label for="tool">刀具</label>
                <div class="combo"><select id="tool"><option>D12 (铣刀-5 参数)</option></select></div>
                <label for="geometry">几何体</label>
                <div class="combo"><select id="geometry"><option>WORKPIECE</option></select></div>
                <label for="method">方法</label>
                <div class="combo"><select id="method"><option>METHOD</option></select></div>
            </div>

            <div class="head"><h3>名称</h3><button type="button" aria-label="折叠"><svg><use href="#chev"/></svg></button></div>
            <div class="section section-name">
                <input type="text" id="name" aria-label="名称" value="FACE_MILLING_AREA" spellcheck="false">
            </div>

            <div class="actions">
                <button type="button" class="ok">确定</button>
                <button type="button">应用</button>
                <button type="button">取消</button>
            </div>
        </div>

        <!-- Red pointers over the dialog -->
        <svg class="pointers" viewBox="73 132 350 240">
            <path d="M251 209 271 209 268 214 340 248 421 293 338 254 265 219 262 223z" fill="#ff3b38"/>
            <path d="M134 266 134 287 130 283 78 360 125 279 120 277z" fill="#ff3b38"/>
        </svg>
    </form>

    <script>
        // name is preselected so typing replaces it
        const nameInput = document.getElementById('name');
        nameInput.focus();
        nameInput.select();
    </script>
</body>
</html>
```
FILE: styles.css
```css
* {
    box-sizing: border-box;
}
body {
    margin: 0;
    height: 100vh;
    display: flex;
    flex-direction: column;
    position: relative;
    overflow: hidden;
    background: #d9d9d9;
    font-family: "Noto Sans", "Noto Sans CJK SC", sans-serif;
    font-size: 12px;
    color: #000;
}
button, select, input {
    font: inherit;
    color: inherit;
    padding: 0;
    margin: 0;
    border: 0;
    background: none;
}
h1, h2, h3 {
    margin: 0;
    font-size: 13px;
    font-weight: bold;
}
svg {
    display: block;
}
.sprite {
    position: absolute;
    width: 0;
    height: 0;
}

/* Toolbars */
.bar {
    display: flex;
    align-items: stretch;
    overflow: hidden;
    background: linear-gradient(#dedede, #d3d3d3);
    border-top: 1px solid #f6f6f6;
    border-bottom: 1px solid #b4b4b4;
}
.bar > * {
    flex-shrink: 0;
}
.bar-standard {
    height: 33px;
    border-top: 0;
}
.bar-standard > :first-child {
    margin-left: -8px;
}
.bar-operation {
    height: 34px;
    padding-left: 2px;
}
.bar-machine {
    height: 36px;
    justify-content: flex-end;
    background: linear-gradient(#d6d6d6, #cecece);
    border-top: 0;
    border-bottom: 2px solid #989898;
}
.bar-machine > :last-child {
    margin-right: -15px;
}
.bar-select {
    height: 28px;
    background: linear-gradient(#c0c0c0, #d9d9d9 8px);
    border: 0;
}
.tool {
    width: 31px;
    display: flex;
    align-items: center;
    justify-content: center;
}
.tool svg {
    width: 24px;
    height: 24px;
    flex-shrink: 0;
}
.tool-text {
    width: 97px;
    gap: 4px;
    white-space: nowrap;
}
.tool.small {
    width: 24px;
}
.tool.small svg {
    width: 18px;
    height: 18px;
}
.tool.off svg {
    filter: grayscale(.6);
    opacity: .55;
}
.tool.active {
    margin: 1px 0;
    border: 2px solid #666;
    border-radius: 3px;
    background: #fff;
}
.tool.active svg {
    width: 27px;
    height: 27px;
}
.drop {
    width: 12px;
    display: flex;
    align-items: center;
    justify-content: center;
}
.drop::before {
    content: "";
    border: 3px solid transparent;
    border-top-color: #000;
    border-bottom: 0;
}
.drop.low {
    align-items: flex-end;
    padding-bottom: 7px;
}
.bar-select .drop {
    width: 8px;
}
.sep {
    width: 2px;
    margin: 1px 2px 1px 1px;
    background: linear-gradient(90deg, #b8b8b8 50%, #fff 50%);
}
.grip {
    width: 11px;
    border-left: 1px solid #fff;
    background: repeating-linear-gradient(#fff 0 2px, #a8a8a8 2px 3px, transparent 3px 4px) 4px 5px / 3px 22px no-repeat;
}

/* Drop-down boxes */
.combo {
    position: relative;
    height: 22px;
    border: 1px solid #6a6a6a;
    border-top-width: 2px;
    border-radius: 4px;
    background: #fff;
    box-shadow: 1px 1px 0 #f4f4f4;
}
.combo select {
    display: block;
    width: 100%;
    height: 100%;
    padding: 0 20px 0 3px;
    appearance: none;
    outline: 0;
}
.combo::after {
    content: "";
    position: absolute;
    top: 0;
    right: 0;
    bottom: 0;
    width: 17px;
    border: 1px solid #2a5aa8;
    border-radius: 0 2px 2px 0;
    background: linear-gradient(#3d84dc, #a9d0f6 45%, #5a9ce8 50%, #9fe0ff);
    pointer-events: none;
}
.combo::before {
    content: "";
    position: absolute;
    z-index: 1;
    top: 7px;
    right: 3px;
    border: 5px solid transparent;
    border-top: 6px solid #111;
    border-bottom: 0;
    pointer-events: none;
}
.combo-off {
    width: 95px;
    margin: 3px 2px 3px 0;
    border-color: #aaa;
    border-left: 0;
    border-radius: 0 4px 4px 0;
    background: #dadada;
}
.combo-off::after {
    border-color: #bbb;
    background: #f2f2f2;
}
.combo-off::before {
    border-top-color: #999;
}

/* Strip under the toolbars */
.strip {
    height: 23px;
    display: flex;
    align-items: center;
    border-top: 1px solid #f2f2f2;
    border-bottom: 1px solid #8c8c8c;
}
.strip h2 {
    width: 430px;
    font-size: 12px;
    line-height: 20px;
}
.strip-end {
    flex: 1;
    align-self: stretch;
    border-left: 1px solid #fff;
}

/* Operation navigator */
.workspace {
    flex: 1;
    min-height: 0;
    display: flex;
    position: relative;
}
.navigator {
    width: 145px;
    display: flex;
    flex-direction: column;
    background: #e9e9e9;
    padding-right: 10px;
    border-right: 2px solid #777;
}
.nav-info {
    height: 36px;
    background: #ebebeb;
    border-bottom: 1px solid #777;
}
.nav-table {
    flex: 1;
    overflow: hidden;
    background: #fff;
}
.nav-table table {
    width: 100%;
    border-collapse: collapse;
    table-layout: fixed;
}
.nav-table th {
    height: 20px;
    padding: 0 0 0 5px;
    font-weight: normal;
    text-align: left;
    background: linear-gradient(#fafafa 45%, #dde0e2 55%);
    border-bottom: 1px solid #888;
    border-right: 1px solid #b4b4b4;
}
.nav-table th:first-child {
    width: 30px;
}
.nav-table td {
    height: 20px;
    padding: 0 0 0 5px;
    border-bottom: 1px solid #e2e2e2;
}
.nav-table td:first-child {
    border-right: 1px solid #000;
}
.nav-table tbody tr:nth-child(even) {
    background: #f5f5f5;
}
.mark {
    width: 14px;
    height: 14px;
}
.nav-foot {
    height: 18px;
    background: linear-gradient(#f4f2ee, #fafafa);
    border-bottom: 1px solid #777;
}
.nav-scroll {
    height: 13px;
    display: flex;
    align-items: center;
    background: linear-gradient(#999, #999) 12px 6px / 100% 1px no-repeat;
    border-bottom: 1px solid #ccc;
}
.nav-scroll span {
    width: 8px;
    height: 6px;
    background: #ddd;
    border: 1px solid #999;
    border-left: 0;
}
.nav-panel {
    height: 23px;
    display: flex;
    justify-content: flex-end;
    background: linear-gradient(#fafafa 45%, #dfe1e3 55%);
    border-bottom: 1px solid #888;
    border-right: 1px solid #888;
}
.nav-panel button {
    width: 23px;
    display: flex;
    align-items: center;
    justify-content: center;
    border-left: 1px solid #aaa;
}
.nav-panel svg {
    width: 12px;
    height: 10px;
    transform: rotate(180deg);
}
.nav-rest {
    height: 6px;
    background: #eee;
    border-right: 1px solid #888;
}

/* 3D view */
.viewport {
    flex: 1;
    min-width: 0;
    background: linear-gradient(#b5b6b8, #e6e7e9 80%);
}
.model {
    width: 100%;
    height: 100%;
    font-family: "Open Sans", sans-serif;
    font-size: 15px;
}
.watermark {
    position: absolute;
    right: 0;
    bottom: 0;
    display: flex;
    gap: 3px;
    height: 32px;
    background: repeating-conic-gradient(#e2e2e2 0 25%, #fff 0 50%) 0 0 / 8px 8px;
    white-space: nowrap;
}
.watermark svg {
    width: 31px;
    height: 31px;
}
.watermark div {
    width: 100px;
    display: flex;
    flex-direction: column;
    align-items: flex-end;
}
.watermark strong {
    font-size: 20px;
    line-height: 22px;
    font-weight: 500;
    color: #0c56a6;
}
.watermark small {
    font-size: 6px;
    line-height: 10px;
    color: #777;
}

/* Create operation dialog */
.dialog {
    position: absolute;
    top: 132px;
    left: 73px;
    width: 317px;
    border-bottom: 8px solid #1c1c1c;
    border-radius: 6px;
    background: #ebebeb;
}
.title {
    height: 26px;
    display: flex;
    align-items: center;
    justify-content: space-between;
    padding: 0 2px 0 8px;
    border: 1px solid #000;
    border-radius: 6px 6px 0 0;
    background: linear-gradient(#77797b, #46484a 7px, #1c1c1c 8px);
}
.title h1 {
    color: #fff;
}
.close {
    width: 20px;
    height: 20px;
    display: flex;
    align-items: center;
    justify-content: center;
    border: 1px solid #ffb0a0;
    border-radius: 3px;
    background: linear-gradient(#f08a70, #e04a28 50%, #d83010);
}
.close svg {
    width: 12px;
    height: 12px;
}
.content {
    padding: 4px 6px 0 5px;
    border: 1px solid #8c8c8c;
    border-width: 0 1px;
}
.head {
    height: 24px;
    display: flex;
    align-items: stretch;
    justify-content: space-between;
    border: 1px solid #fff;
    border-right-color: #888;
    border-bottom: 2px solid #7c7c7c;
    background: linear-gradient(#f6f7f8 50%, #dee0e2 60%, #e2e4e6);
}
.head h3 {
    padding-left: 5px;
    font-size: 12px;
    line-height: 22px;
}
.head button {
    width: 22px;
    display: flex;
    align-items: center;
    justify-content: center;
    border-left: 1px solid #aaa;
    box-shadow: inset 1px 0 0 #fff;
}
.head svg {
    width: 12px;
    height: 10px;
}
.section {
    padding: 5px 8px;
    border: 1px solid #8c8c8c;
    border-width: 0 1px;
    background: #d3d3d3;
    box-shadow: inset 0 2px 3px #bcbcbc;
}
.section-type,
.section-name {
    height: 37px;
    padding: 5px 8px;
}
.subtypes {
    height: 118px;
    padding-top: 9px;
    display: grid;
    grid-template-columns: repeat(6, 30px);
    grid-auto-rows: 30px;
    gap: 4px;
    justify-content: center;
}
.subtypes button {
    display: flex;
    align-items: center;
    justify-content: center;
    border: 2px solid transparent;
    border-radius: 4px;
}
.subtypes svg {
    width: 24px;
    height: 24px;
    flex-shrink: 0;
}
.subtypes .selected {
    border-color: #8a7668;
    background: linear-gradient(135deg, #fff, #ffc090 50%, #ff8a3c);
}
.letter {
    font-family: "Liberation Serif", serif;
    font-size: 17px;
    font-weight: bold;
    fill: #00f;
}
.location {
    height: 112px;
    padding: 5px 8px 0 7px;
    display: grid;
    grid-template-columns: 1fr 141px;
    grid-auto-rows: 22px;
    gap: 3px 0;
    align-items: center;
}
.section-name input {
    display: block;
    width: 100%;
    height: 22px;
    padding: 0 3px;
    border: 1px solid #6a6a6a;
    border-top-width: 2px;
    border-radius: 4px;
    outline: 0;
    background: #fff;
    font-family: "Liberation Mono", monospace;
    font-size: 15px;
}
.section-name input::selection {
    background: #316ac5;
    color: #fff;
}
.actions {
    height: 33px;
    display: flex;
    justify-content: flex-end;
    gap: 7px;
    margin-top: 3px;
    padding: 5px 10px 0 0;
    border-top: 1px solid #aaa;
}
.actions button {
    width: 64px;
    height: 22px;
    border: 2px solid #6e6e6e;
    border-bottom-width: 1px;
    border-radius: 4px;
    background: linear-gradient(#fff, #e8e8e8 45%, #cfcfcf 50%, #f4f4f4);
}
.actions .ok {
    border-color: #1c6a1c;
    background: linear-gradient(#d8f6c0, #9ede80 45%, #5ec43c 50%, #b4f890);
}
.pointers {
    position: absolute;
    top: 0;
    left: 0;
    width: 350px;
    height: 240px;
    overflow: visible;
    pointer-events: none;
}
```
